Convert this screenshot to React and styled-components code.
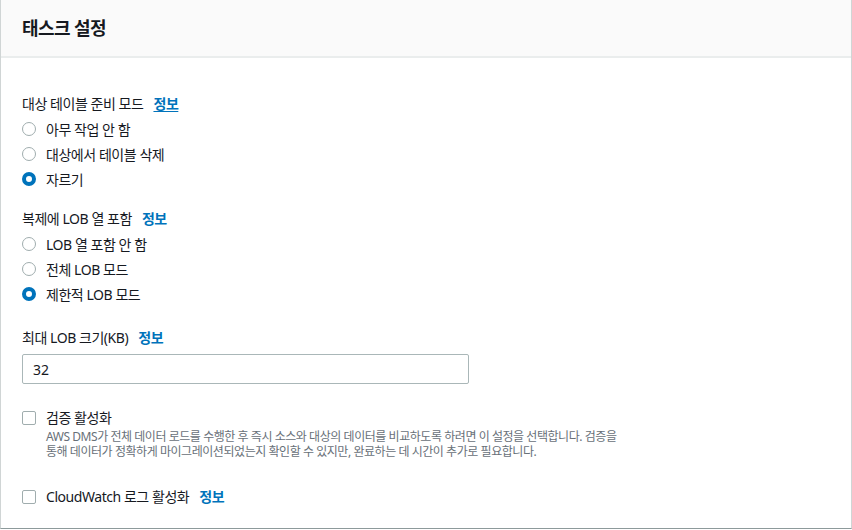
import React from "react";
import styled, { createGlobalStyle } from "styled-components";

const GlobalStyle = createGlobalStyle`
  body {
    margin: 0;
    background: #ffffff;
    font-family: "Noto Sans", "Noto Sans CJK KR", sans-serif;
    color: #16191f;
  }
`;

const Panel = styled.section`
  width: 852px;
  box-sizing: border-box;
  border-left: 1px solid #d0d5d5;
  border-right: 1px solid #d0d5d5;
  border-bottom: 1px solid #8d9a9b;
  background: #ffffff;
`;

const Header = styled.header`
  height: 58px;
  box-sizing: border-box;
  background: #fafafa;
  border-bottom: 2px solid #eaeded;
  display: flex;
  align-items: center;
  padding: 0 21px;
`;

const Title = styled.h2`
  margin: 0;
  font-size: 18px;
  font-weight: 700;
  line-height: 22px;
  letter-spacing: -0.6px;
  color: #16191f;
`;

const Body = styled.div`
  padding: 35px 21px 20px;
  display: flex;
  flex-direction: column;
  letter-spacing: -0.45px;
`;

const Field = styled.div`
  display: flex;
  flex-direction: column;
  margin-top: ${(p) => p.$top || 0}px;
`;

const Label = styled.div`
  font-size: 14px;
  line-height: 22px;
  display: flex;
  align-items: center;
  gap: 10px;
`;

const Info = styled.a`
  color: #0073bb;
  font-weight: 700;
  font-size: 14px;
  text-decoration: ${(p) => (p.$underline ? "underline" : "none")};
  text-underline-offset: 2px;
  cursor: pointer;
`;

const RadioList = styled.div`
  display: flex;
  flex-direction: column;
  margin-top: 1px;
`;

const Option = styled.label`
  height: 25px;
  display: flex;
  align-items: center;
  gap: 10px;
  font-size: 14px;
`;

const RadioDot = styled.span`
  width: 14px;
  height: 14px;
  box-sizing: border-box;
  border-radius: 50%;
  border: ${(p) => (p.$checked ? "4px solid #0073bb" : "1px solid #a0adae")};
  background: #ffffff;
  flex-shrink: 0;
`;

const Input = styled.input`
  margin-top: 5px;
  width: 447px;
  height: 30px;
  box-sizing: border-box;
  border: 1px solid #aab7b8;
  border-radius: 2px;
  padding: 0 10px;
  font-family: "Noto Sans", "Noto Sans CJK KR", sans-serif;
  font-size: 14px;
  color: #16191f;
  outline: none;
`;

const CheckRow = styled.div`
  display: flex;
  gap: 10px;
  margin-top: ${(p) => p.$top || 0}px;
`;

const Box = styled.span`
  width: 14px;
  height: 14px;
  box-sizing: border-box;
  border: 1px solid #a0adae;
  border-radius: 2px;
  margin-top: 4px;
  flex-shrink: 0;
`;

const CheckText = styled.div`
  display: flex;
  flex-direction: column;
`;

const Description = styled.p`
  margin: 0;
  font-size: 12px;
  line-height: 15px;
  color: #687078;
  max-width: 580px;
  word-break: keep-all;
`;

const Radio = ({ checked, children }) => (
  <Option>
    <RadioDot $checked={checked} />
    {children}
  </Option>
);

export default function App() {
  return (
    <>
      <GlobalStyle />
      <Panel>
        <Header>
          <Title>태스크 설정</Title>
        </Header>
        <Body>
          <Field>
            <Label>
              대상 테이블 준비 모드 <Info $underline>정보</Info>
            </Label>
            <RadioList>
              <Radio>아무 작업 안 함</Radio>
              <Radio>대상에서 테이블 삭제</Radio>
              <Radio checked>자르기</Radio>
            </RadioList>
          </Field>

          <Field $top={17}>
            <Label>
              복제에 LOB 열 포함 <Info>정보</Info>
            </Label>
            <RadioList>
              <Radio>LOB 열 포함 안 함</Radio>
              <Radio>전체 LOB 모드</Radio>
              <Radio checked>제한적 LOB 모드</Radio>
            </RadioList>
          </Field>

          <Field $top={21}>
            <Label>
              최대 LOB 크기(KB) <Info>정보</Info>
            </Label>
            <Input defaultValue="32" />
          </Field>

          <CheckRow $top={23}>
            <Box />
            <CheckText>
              <Label>검증 활성화</Label>
              <Description>
                AWS DMS가 전체 데이터 로드를 수행한 후 즉시 소스와 대상의 데이터를 비교하도록 하려면 이 설정을 선택합니다. 검증을 통해 데이터가 정확하게 마이그레이션되었는지 확인할 수 있지만, 완료하는 데 시간이 추가로 필요합니다.
              </Description>
            </CheckText>
          </CheckRow>

          <CheckRow $top={27}>
            <Box />
            <Label>
              CloudWatch 로그 활성화 <Info>정보</Info>
            </Label>
          </CheckRow>
        </Body>
      </Panel>
    </>
  );
}
